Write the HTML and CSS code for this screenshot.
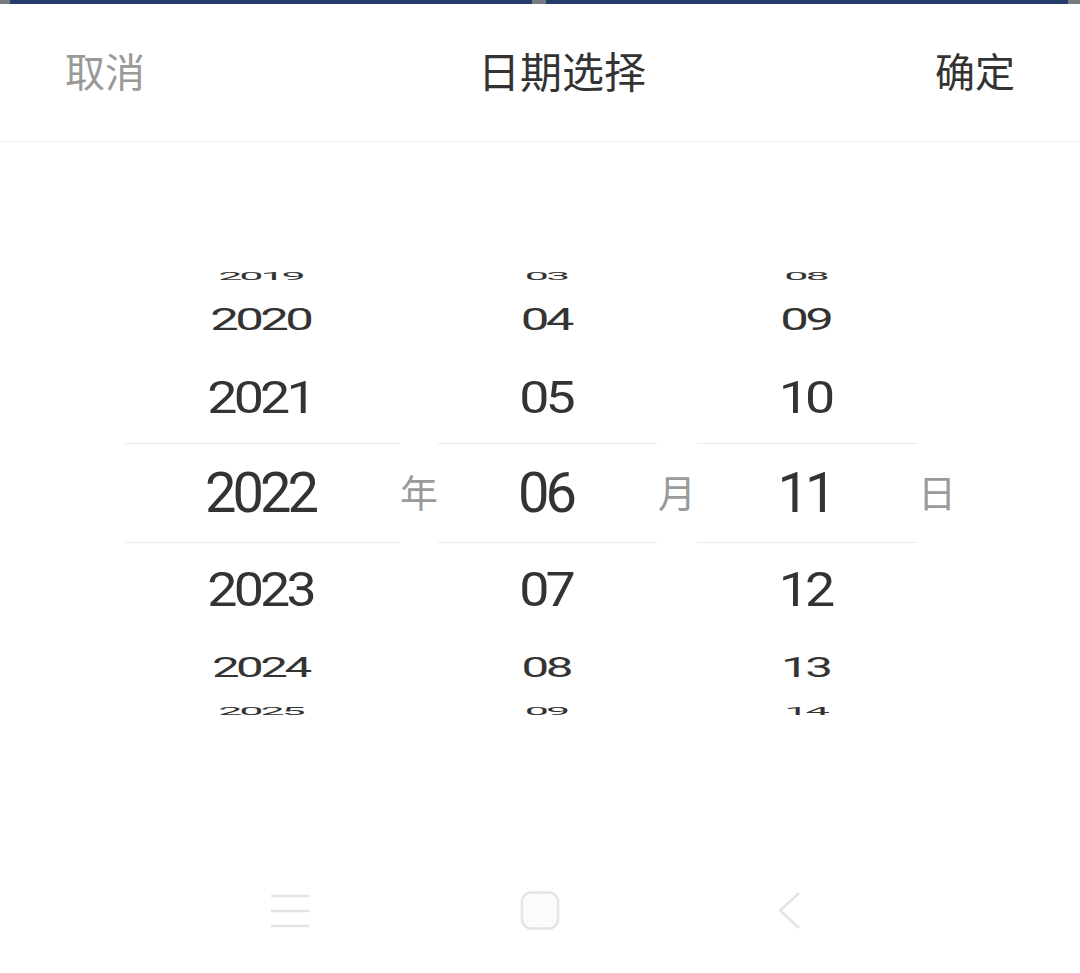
FILE: index.html
```html
<!DOCTYPE html>
<html lang="zh-CN">
<head>
<meta charset="utf-8">
<title>日期选择</title>
<link rel="stylesheet" href="styles.css">
</head>
<body>
<div class="topbar">
  <span class="seg seg-gray seg-edge"></span>
  <span class="seg seg-blue"></span>
  <span class="seg seg-gray seg-mid"></span>
  <span class="seg seg-blue"></span>
  <span class="seg seg-gray seg-edge-r"></span>
</div>
<header class="header">
  <span class="btn btn-cancel">取消</span>
  <span class="title">日期选择</span>
  <span class="btn btn-ok">确定</span>
</header>
<main class="picker">
  <div class="wheel wheel-year">
    <div class="row p-3">2019</div>
    <div class="row p-2">2020</div>
    <div class="row p-1">2021</div>
    <div class="row p0">2022</div>
    <div class="row p1">2023</div>
    <div class="row p2">2024</div>
    <div class="row p3">2025</div>
  </div>
  <div class="unit">年</div>
  <div class="wheel wheel-month">
    <div class="row p-3">03</div>
    <div class="row p-2">04</div>
    <div class="row p-1">05</div>
    <div class="row p0">06</div>
    <div class="row p1">07</div>
    <div class="row p2">08</div>
    <div class="row p3">09</div>
  </div>
  <div class="unit">月</div>
  <div class="wheel wheel-day">
    <div class="row p-3">08</div>
    <div class="row p-2">09</div>
    <div class="row p-1">10</div>
    <div class="row p0">11</div>
    <div class="row p1">12</div>
    <div class="row p2">13</div>
    <div class="row p3">14</div>
  </div>
  <div class="unit">日</div>
</main>
<nav class="navbar">
  <span class="nav-icon">
    <svg width="40" height="40" viewBox="0 0 40 40"><g stroke="#e4e4e4" stroke-width="2.5" fill="none"><line x1="1" y1="5" x2="39" y2="5"/><line x1="1" y1="20" x2="39" y2="20"/><line x1="1" y1="35" x2="39" y2="35"/></g></svg>
  </span>
  <span class="nav-icon">
    <svg width="40" height="40" viewBox="0 0 40 40"><rect x="2" y="1.5" width="36" height="36" rx="9" ry="9" stroke="#e4e4e4" stroke-width="2.5" fill="#fbfbfb"/></svg>
  </span>
  <span class="nav-icon">
    <svg width="40" height="40" viewBox="0 0 40 40"><polyline points="29,2 10,19.5 29,37" stroke="#e4e4e4" stroke-width="2.5" fill="none"/></svg>
  </span>
</nav>
</body>
</html>
```

FILE: styles.css
```css
html, body {
  margin: 0;
  padding: 0;
  background: #ffffff;
}
body {
  width: 1080px;
  height: 973px;
  overflow: hidden;
  font-family: "Noto Sans CJK SC", "Noto Sans", sans-serif;
}
.topbar {
  display: flex;
  height: 4px;
}
.seg { display: block; height: 4px; }
.seg-gray { background: #777a80; }
.seg-blue { background: #253d6a; flex: 1; }
.seg-edge { width: 10px; }
.seg-mid { width: 14px; }
.seg-edge-r { width: 12px; }

.header {
  height: 138px;
  display: flex;
  align-items: center;
  justify-content: space-between;
  padding: 0 65px 6px;
  border-bottom: 1px solid #efefef;
  box-sizing: border-box;
}
.btn {
  font-size: 40px;
  line-height: 1;
}
.btn-cancel { color: #999999; }
.btn-ok { color: #333333; }
.title {
  font-size: 42px;
  color: #333333;
  line-height: 1;
  margin-left: 44px;
}

.picker {
  display: flex;
  align-items: center;
  padding: 121px 0 0 124px;
}
.wheel {
  display: flex;
  flex-direction: column;
}
.wheel-year { width: 276px; }
.wheel-month { width: 219px; }
.wheel-day { width: 220px; }
.unit {
  width: 38px;
  text-align: center;
  font-size: 38px;
  color: #9a9a9a;
  line-height: 1;
  padding-bottom: 7px;
}
.wheel-month + .unit,
.wheel-day + .unit { width: 40px; }

.row {
  font-family: "Roboto", "Liberation Sans", sans-serif;
  font-size: 56px;
  color: #333333;
  letter-spacing: -4px;
  padding-right: 4px;
  box-sizing: border-box;
  text-align: center;
  white-space: nowrap;
}
.p-3 { height: 22px; line-height: 22px; transform: translateY(3px) scale(0.77, 0.18); }
.p-2 { height: 68px; line-height: 68px; transform: translateY(1px) scale(0.91, 0.55); }
.p-1 { height: 90px; line-height: 90px; transform: scale(0.96, 0.8); }
.p0 {
  height: 100px;
  line-height: 98px;
  border-top: 1px solid #ececec;
  border-bottom: 1px solid #ececec;
}
.p1 { height: 94px; line-height: 94px; transform: scale(0.96, 0.85); }
.p2 { height: 58px; line-height: 58px; transform: translateY(1px) scale(0.88, 0.5); }
.p3 { height: 30px; line-height: 30px; transform: translateY(2px) scale(0.77, 0.18); }

.navbar {
  display: flex;
  justify-content: center;
  gap: 210px;
  margin-top: 166px;
}
.nav-icon {
  display: block;
  width: 40px;
  height: 40px;
}
.nav-icon svg { display: block; }
```
